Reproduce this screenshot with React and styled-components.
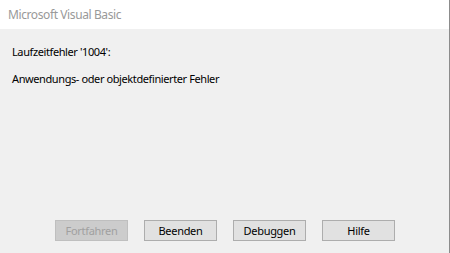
import React from "react";
import styled, { createGlobalStyle } from "styled-components";

const GlobalStyle = createGlobalStyle`
  html, body {
    margin: 0;
    padding: 0;
    background: #ffffff;
  }
  body {
    font-family: "Noto Sans", "Open Sans", sans-serif;
  }
`;

const Window = styled.div`
  width: 450px;
  height: 253px;
  box-sizing: border-box;
  border-right: 1px solid #8c8c8c;
  display: flex;
  flex-direction: column;
  background: #f0f0f0;
  overflow: hidden;
`;

const TitleBar = styled.div`
  height: 29px;
  flex: 0 0 29px;
  background: #ffffff;
  display: flex;
  align-items: center;
  padding-left: 8px;
  color: #999999;
  font-size: 12px;
  letter-spacing: -0.4px;
`;

const Body = styled.div`
  flex: 1;
  display: flex;
  flex-direction: column;
  padding: 15px 12px 0 12px;
  color: #000000;
  font-size: 11px;
  letter-spacing: -0.4px;
`;

const Message = styled.div`
  line-height: 16px;
  margin-bottom: ${p => p.gap || 0}px;
`;

const Buttons = styled.div`
  margin-top: auto;
  margin-bottom: 12px;
  display: flex;
  gap: 16px;
  padding-left: 43px;
`;

const Button = styled.button`
  width: 73px;
  height: 21px;
  box-sizing: border-box;
  padding: 0;
  font-family: inherit;
  font-size: 11px;
  letter-spacing: -0.3px;
  border: 1px solid ${p => (p.disabled ? "#bfbfbf" : "#adadad")};
  background: ${p => (p.disabled ? "#cccccc" : "#e1e1e1")};
  color: ${p => (p.disabled ? "#a0a0a0" : "#000000")};
  border-radius: 0;
`;

export default function App() {
  return (
    <>
      <GlobalStyle />
      <Window>
        <TitleBar>Microsoft Visual Basic</TitleBar>
        <Body>
          <Message gap={11}>Laufzeitfehler '1004':</Message>
          <Message>Anwendungs- oder objektdefinierter Fehler</Message>
          <Buttons>
            <Button disabled>Fortfahren</Button>
            <Button>Beenden</Button>
            <Button>Debuggen</Button>
            <Button>Hilfe</Button>
          </Buttons>
        </Body>
      </Window>
    </>
  );
}
